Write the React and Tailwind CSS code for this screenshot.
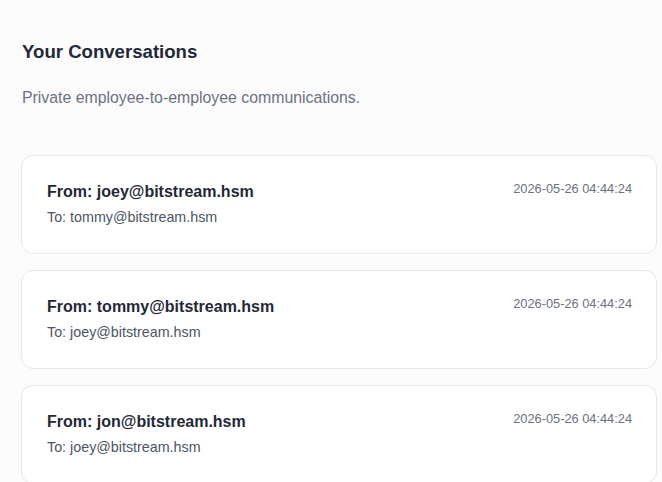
const conversations = [
  { from: 'joey@bitstream.hsm', to: 'tommy@bitstream.hsm', date: '2026-05-26 04:44:24' },
  { from: 'tommy@bitstream.hsm', to: 'joey@bitstream.hsm', date: '2026-05-26 04:44:24' },
  { from: 'jon@bitstream.hsm', to: 'joey@bitstream.hsm', date: '2026-05-26 04:44:24' },
];

export default function App() {
  return (
    <div
      className="min-h-screen bg-[#fcfcfd] pl-[21px] pr-[5px] pt-[38px]"
      style={{ fontFamily: '"Liberation Sans", Arial, sans-serif' }}
    >
      <h1 className="pl-px text-[18.6px] font-bold leading-7 text-[#1f2937]">Your Conversations</h1>
      <p className="mt-[20px] pl-px text-[15.85px] leading-6 text-[#6b7280]">
        Private employee-to-employee communications.
      </p>

      <div className="mt-[45px] flex flex-col gap-4">
        {conversations.map((c, i) => (
          <div
            key={i}
            className="flex items-start justify-between rounded-xl border border-[#e5e7eb] bg-white pl-6 pr-6 pt-6 pb-[26px]"
          >
            <div className="pl-px">
              <div className="text-base font-bold leading-6 text-[#1f2937]">From: {c.from}</div>
              <div className="mt-[3px] text-[14.3px] leading-5 text-[#4b5563]">To: {c.to}</div>
            </div>
            <div className="mt-px text-[12.8px] leading-4 text-[#6b7280]">{c.date}</div>
          </div>
        ))}
      </div>
    </div>
  );
}
